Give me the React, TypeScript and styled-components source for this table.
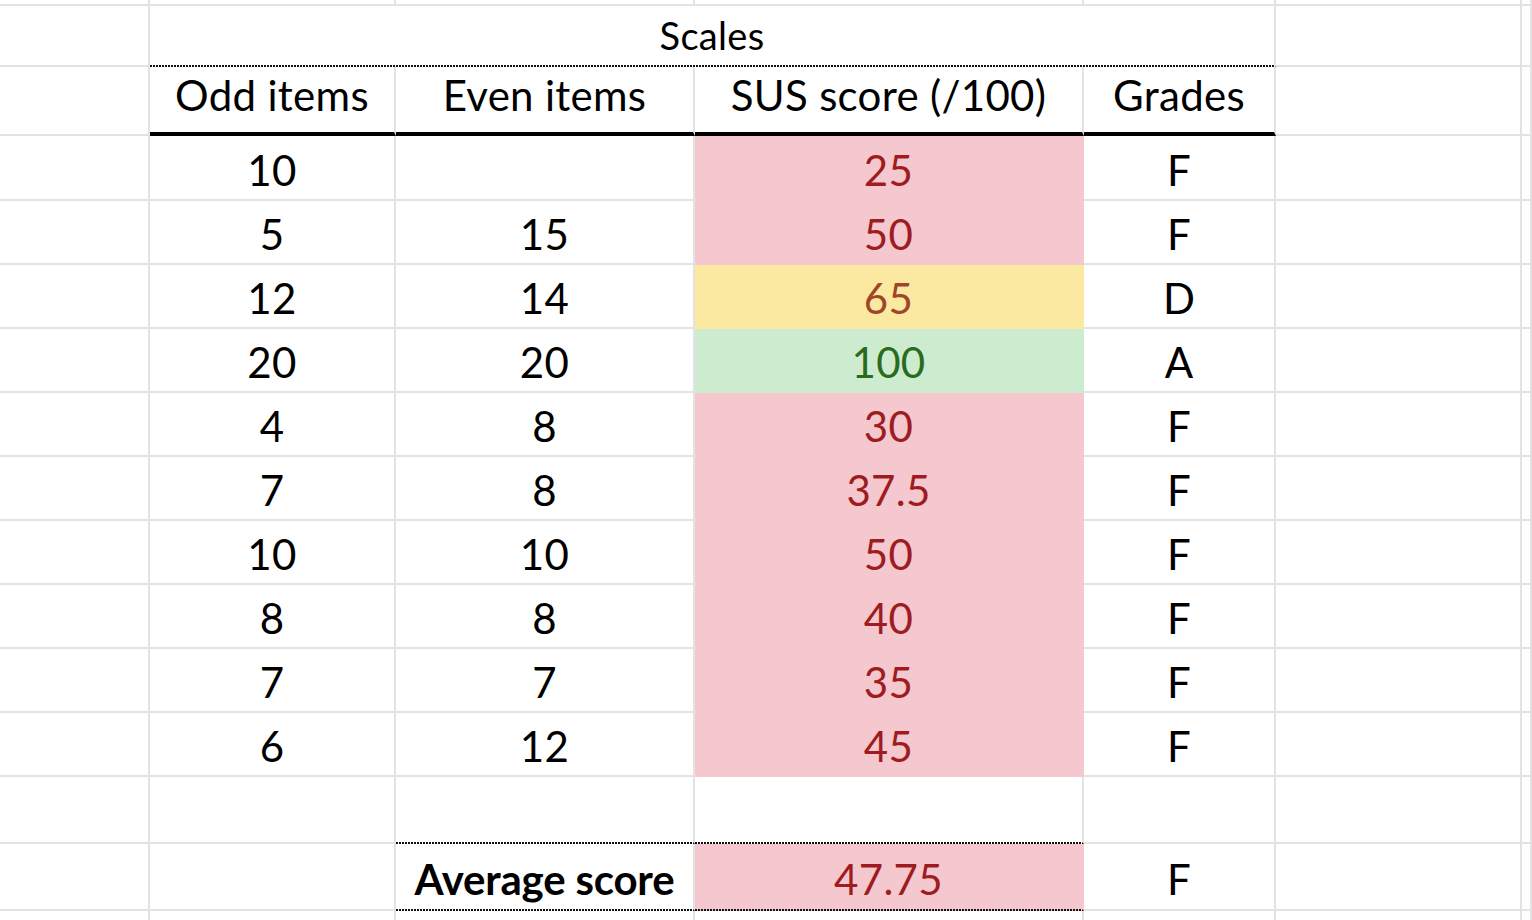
import React from "react";
import styled, { createGlobalStyle, css } from "styled-components";

const GlobalStyle = createGlobalStyle`
  html, body {
    margin: 0;
    padding: 0;
    background: #ffffff;
    overflow: hidden;
  }
  body {
    font-family: Lato, "Liberation Sans", sans-serif;
    color: #000;
  }
`;

type Tone = "bad" | "ok" | "good";
type Rule = "grid" | "dotted" | "thick";

const tones: Record<Tone, { bg: string; fg: string }> = {
  bad: { bg: "#f5c7ce", fg: "#9e1c20" },
  ok: { bg: "#fbe9a2", fg: "#a1452a" },
  good: { bg: "#cdebcf", fg: "#2a6b1c" },
};

const GRID = "#e3e3e3";

const Sheet = styled.div`
  display: grid;
  grid-template-columns: 150px 246px 299px 389px 192px 246px 1fr;
  grid-template-rows: 2px 65px 69px 65px repeat(9, 64px) 67px 67px 20px;
  width: 1532px;
  height: 920px;
`;

const Cell = styled.div<{
  $span?: number;
  $tone?: Tone;
  $rule?: Rule;
  $bold?: boolean;
  $size?: number;
  $lift?: number;
}>`
  box-sizing: border-box;
  display: flex;
  align-items: center;
  justify-content: center;
  padding-top: ${(p) => Math.max(0, 4 - (p.$lift ?? 0))}px;
  padding-bottom: ${(p) => Math.max(0, (p.$lift ?? 0) - 4)}px;
  grid-column: span ${(p) => p.$span ?? 1};
  border-right: 2px solid ${GRID};
  border-bottom: 2px solid ${GRID};
  font-size: ${(p) => p.$size ?? 42}px;
  font-weight: ${(p) => (p.$bold ? 700 : 400)};
  letter-spacing: ${(p) => (p.$bold ? "-0.2px" : "0.3px")};
  white-space: nowrap;
  line-height: 1;
  color: #000;
  ${(p) =>
    p.$tone &&
    css`
      background-color: ${tones[p.$tone].bg};
      color: ${tones[p.$tone].fg};
      border-right-color: ${tones[p.$tone].bg};
      border-bottom-color: ${tones[p.$tone].bg};
    `}
  ${(p) =>
    p.$rule === "dotted" &&
    css`
      border-bottom-color: transparent;
      background-origin: border-box;
      background-image: repeating-linear-gradient(
        to right,
        #111 0 2px,
        transparent 2px 3px
      );
      background-position: left bottom;
      background-size: 100% 2px;
      background-repeat: no-repeat;
    `}
  ${(p) =>
    p.$rule === "thick" &&
    css`
      border-bottom: 4px solid #000;
    `}
`;

const rows: { odd: string; even: string; sus: string; tone: Tone; grade: string }[] = [
  { odd: "10", even: "", sus: "25", tone: "bad", grade: "F" },
  { odd: "5", even: "15", sus: "50", tone: "bad", grade: "F" },
  { odd: "12", even: "14", sus: "65", tone: "ok", grade: "D" },
  { odd: "20", even: "20", sus: "100", tone: "good", grade: "A" },
  { odd: "4", even: "8", sus: "30", tone: "bad", grade: "F" },
  { odd: "7", even: "8", sus: "37.5", tone: "bad", grade: "F" },
  { odd: "10", even: "10", sus: "50", tone: "bad", grade: "F" },
  { odd: "8", even: "8", sus: "40", tone: "bad", grade: "F" },
  { odd: "7", even: "7", sus: "35", tone: "bad", grade: "F" },
  { odd: "6", even: "12", sus: "45", tone: "bad", grade: "F" },
];

const Blank = () => <Cell />;

export default function App() {
  return (
    <>
      <GlobalStyle />
      <Sheet>
        {/* sliver of the row above */}
        {Array.from({ length: 7 }).map((_, i) => (
          <Cell key={`top-${i}`} />
        ))}

        {/* title row */}
        <Blank />
        <Cell $span={4} $rule="dotted" $size={38} $lift={2}>
          Scales
        </Cell>
        <Blank />
        <Blank />

        {/* header row */}
        <Blank />
        <Cell $rule="thick" $lift={14}>Odd items</Cell>
        <Cell $rule="thick" $lift={14}>Even items</Cell>
        <Cell $rule="thick" $lift={14}>SUS score (/100)</Cell>
        <Cell $rule="thick" $lift={14}>Grades</Cell>
        <Blank />
        <Blank />

        {rows.map((r, i) => (
          <React.Fragment key={i}>
            <Blank />
            <Cell>{r.odd}</Cell>
            <Cell>{r.even}</Cell>
            <Cell $tone={r.tone}>{r.sus}</Cell>
            <Cell>{r.grade}</Cell>
            <Blank />
            <Blank />
          </React.Fragment>
        ))}

        {/* empty row */}
        <Blank />
        <Blank />
        <Cell $rule="dotted" />
        <Cell $rule="dotted" />
        <Blank />
        <Blank />
        <Blank />

        {/* average row */}
        <Blank />
        <Blank />
        <Cell $rule="dotted" $bold>
          Average score
        </Cell>
        <Cell $tone="bad" $rule="dotted">
          47.75
        </Cell>
        <Cell>F</Cell>
        <Blank />
        <Blank />

        {/* next row */}
        {Array.from({ length: 7 }).map((_, i) => (
          <Cell key={`bottom-${i}`} />
        ))}
      </Sheet>
    </>
  );
}
